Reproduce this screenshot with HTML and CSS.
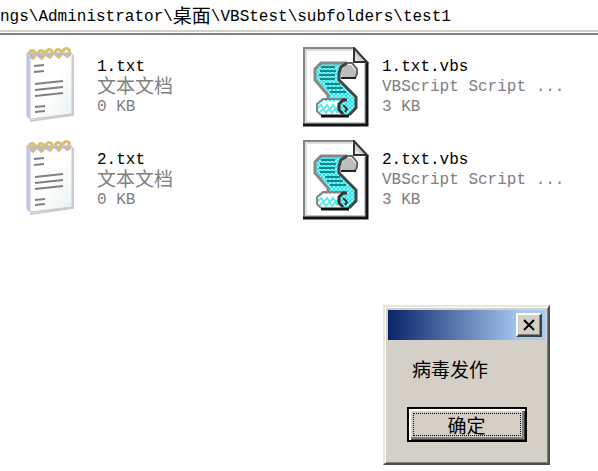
FILE: index.html
```html
<!DOCTYPE html>
<html lang="zh-CN">
<head>
<meta charset="utf-8">
<title>test1</title>
<link rel="stylesheet" href="styles.css">
</head>
<body>
<svg class="defs" aria-hidden="true">
  <defs>
    <linearGradient id="paper" x1="0" y1="0" x2="1" y2="1">
      <stop offset="0.5" stop-color="#fff"/>
      <stop offset="1" stop-color="#e8f1f1"/>
    </linearGradient>
    <linearGradient id="fold" x1="0" y1="1" x2="1" y2="0">
      <stop offset="0" stop-color="#fff"/>
      <stop offset="1" stop-color="#777"/>
    </linearGradient>
    <pattern id="dither" width="4" height="4" patternUnits="userSpaceOnUse">
      <rect width="4" height="4" fill="#25e8ee"/>
      <rect width="2" height="2" fill="#a5f6f8"/>
      <rect x="2" y="2" width="2" height="2" fill="#80f1f5"/>
    </pattern>
    <symbol id="notepad" viewBox="0 0 66 80">
      <path d="M55 8V68L12 74" fill="none" stroke="#ccc" stroke-width="2"/>
      <path d="M9 6L53 6L54 67L12 72L9 69Z" fill="#c6c5ef" stroke="#b9b8dc"/>
      <path d="M12 8L54 6L54 67L12 72Z" fill="url(#paper)" stroke="#c8ccd0"/>
      <path d="M12 6H53V9L49 11L45 8L41 12L36 8L32 12L27 9L23 13L19 9L15 13L12 11Z" fill="#b8b7df"/>
      <g fill="none" stroke="#d7c071" stroke-width="3">
        <path d="M11 7C12 2 18 3 17 7C17 9 15 11 14 12"/>
        <path d="M20 7C21 2 27 3 26 7C26 9 24 11 23 12"/>
        <path d="M28 6C29 1 35 2 34 6C34 8 32 10 31 11"/>
        <path d="M37 6C38 1 44 2 43 6C43 8 41 10 40 11"/>
        <path d="M45 5C46 0 53 1 51 5C51 7 49 9 48 10"/>
      </g>
      <path d="M16 19L26 18M16 25L26 24M17 37L45 34M17 43L45 40M17 49L45 46M17 60L27 59M17 65L27 64" stroke="#808080" stroke-width="2"/>
    </symbol>
    <symbol id="script" viewBox="0 0 66 80">
      <path d="M1 1H50L64 15V78H1Z" fill="#fff"/>
      <path d="M3 77V3H49" fill="none" stroke="#ddd" stroke-width="2"/>
      <path d="M1 79V1H51" fill="none" stroke="#858585" stroke-width="2"/>
      <path d="M62 17V76H3" fill="none" stroke="#c4c4c4" stroke-width="2"/>
      <path d="M64 15V78H0" fill="none" stroke="#111" stroke-width="3"/>
      <path d="M51 1V15H64Z" fill="url(#fold)" stroke="#333" stroke-width="2"/>
      <path d="M18 16H45L39 21L36 27V33L53 50V61L46 69H18L14 65V57L19 53H26V49L18 40L12 33V22Z" fill="url(#dither)"/>
      <path d="M44 16H18L12 22V33L18 40L25 48V52" fill="none" stroke="#888" stroke-width="3"/>
      <path d="M42 18L48 18L54 25L52 30H39L37 26Z" fill="#bdbdbd"/>
      <path d="M44 16L38 20L36 26V33L53 50V61L46 68" fill="none" stroke="#444" stroke-width="3"/>
      <path d="M44 16H49L54 22V27L52 31" fill="none" stroke="#666" stroke-width="2"/>
      <path d="M38 31H53" stroke="#222" stroke-width="2"/>
      <path d="M18 20H32M17 24H33M16 28H32M17 32H32M22 37H37M24 41H40M27 45H43" stroke="#14858a" stroke-width="2"/>
      <path d="M20 54H40L36 60L40 68H18L15 64V58Z" fill="#fff"/>
      <path d="M15 61L18 58L21 62L24 58L27 62L30 58L33 62L36 59M17 65L20 62L23 66L26 62L29 66L32 62L35 66" fill="none" stroke="#5deaf0" stroke-width="2"/>
      <path d="M43 52H20L14 57V64L18 68" fill="none" stroke="#858585" stroke-width="2"/>
      <path d="M18 69H46" stroke="#111" stroke-width="3"/>
      <path d="M44 53L40 53L36 57V63L40 67" fill="none" stroke="#333" stroke-width="3"/>
      <path d="M40 58L44 62L42 65" fill="none" stroke="#333" stroke-width="2"/>
    </symbol>
  </defs>
</svg>

<header class="address">ngs\Administrator\<span class="cjk">桌面</span>\VBStest\subfolders\test1</header>

<main class="files">
  <article class="file">
    <svg class="file-icon" aria-hidden="true"><use href="#notepad"/></svg>
    <div class="file-info">
      <div class="file-name">1.txt</div>
      <div class="cjk">文本文档</div>
      <div>0 KB</div>
    </div>
  </article>
  <article class="file">
    <svg class="file-icon" aria-hidden="true"><use href="#script"/></svg>
    <div class="file-info">
      <div class="file-name">1.txt.vbs</div>
      <div>VBScript Script ...</div>
      <div>3 KB</div>
    </div>
  </article>
  <article class="file">
    <svg class="file-icon" aria-hidden="true"><use href="#notepad"/></svg>
    <div class="file-info">
      <div class="file-name">2.txt</div>
      <div class="cjk">文本文档</div>
      <div>0 KB</div>
    </div>
  </article>
  <article class="file">
    <svg class="file-icon" aria-hidden="true"><use href="#script"/></svg>
    <div class="file-info">
      <div class="file-name">2.txt.vbs</div>
      <div>VBScript Script ...</div>
      <div>3 KB</div>
    </div>
  </article>
</main>

<section class="dialog" role="dialog" aria-labelledby="message">
  <div class="titlebar">
    <button class="close" type="button" aria-label="关闭">
      <svg class="close-icon" viewBox="0 0 14 12" aria-hidden="true"><path d="M2 1L12 11M12 1L2 11" stroke="#000" stroke-width="2"/></svg>
    </button>
  </div>
  <p class="message" id="message">病毒发作</p>
  <button class="ok" type="button"><span class="ok-label">确定</span></button>
</section>
</body>
</html>
```
FILE: styles.css
```css
* {
  box-sizing: border-box;
}

body {
  margin: 0;
  background: #fff;
  color: #000;
  font: 16px/20px "Liberation Mono", "Noto Sans CJK SC", monospace;
}

.defs {
  position: absolute;
  width: 0;
  height: 0;
}

.cjk {
  font-size: 19px;
  line-height: 18px;
}

.file-info .cjk {
  padding-top: 2px;
}

.address {
  padding: 7px 0 3px;
  border-bottom: 2px solid #d4d0c8;
  white-space: nowrap;
}

.address .cjk {
  vertical-align: -2px;
  line-height: 16px;
}

.files {
  display: grid;
  grid-template-columns: 285px 1fr;
  row-gap: 13px;
  margin-top: 1px;
  padding: 12px 18px;
  border-top: 2px solid #808080;
}

.file {
  display: flex;
  gap: 13px;
}

.file-icon {
  flex: none;
  width: 66px;
  height: 80px;
}

.file-info {
  padding-top: 10px;
  color: #808080;
  white-space: nowrap;
}

.file-name {
  color: #000;
}

.dialog {
  position: absolute;
  top: 305px;
  left: 383px;
  width: 167px;
  padding: 3px 3px 21px;
  background: #d4d0c8;
  border: 2px solid;
  border-color: #e8e5df #505050 #505050 #e8e5df;
  box-shadow: inset 1px 1px #fff, inset -1px -1px #808080;
  font-family: "Noto Sans CJK SC", sans-serif;
  font-size: 19px;
}

.titlebar {
  display: flex;
  justify-content: flex-end;
  padding: 3px;
  background: linear-gradient(to right, #0a246a, #a6caf0 85%);
}

.close {
  display: grid;
  place-items: center;
  width: 26px;
  height: 24px;
  padding: 0;
  background: #d4d0c8;
  border: 2px solid;
  border-color: #fff #404040 #404040 #fff;
  box-shadow: inset -1px -1px #808080;
}

.close-icon {
  width: 14px;
  height: 12px;
}

.message {
  margin: 19px 24px 28px;
  line-height: 20px;
}

.ok {
  display: block;
  width: 120px;
  margin: 0 auto;
  padding: 4px;
  background: #d4d0c8;
  border: 2px solid #000;
  box-shadow: inset 2px 2px #fff, inset -1px -1px #404040, inset -3px -3px #808080;
  color: #000;
  font: inherit;
}

.ok-label {
  display: block;
  border: 1px dotted #000;
  line-height: 21px;
}
```
